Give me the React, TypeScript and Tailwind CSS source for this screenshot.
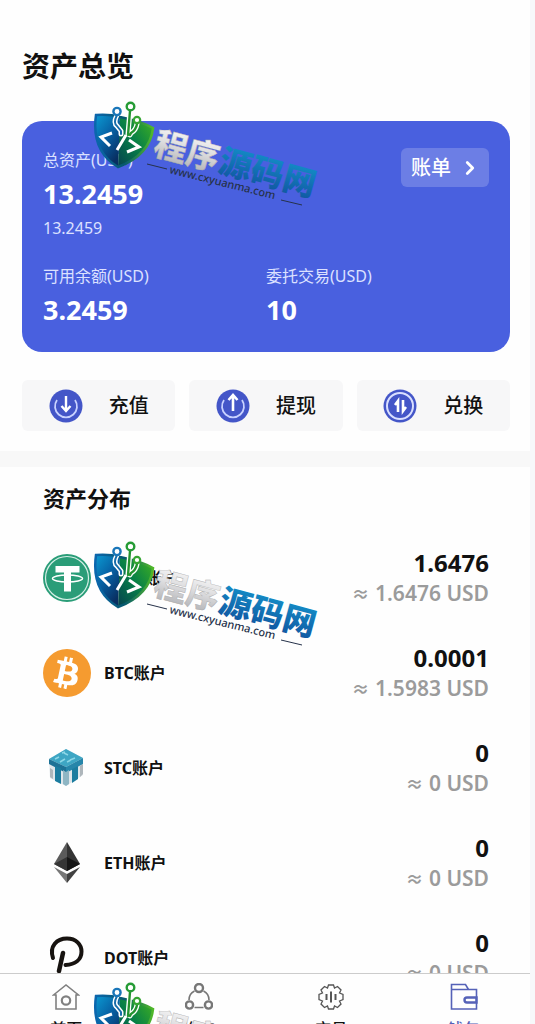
import type { ReactNode } from 'react';
import { ChevronRight } from 'lucide-react';
import { FaBtc } from 'react-icons/fa';

function TetherIcon() {
  return (
    <svg viewBox="0 0 48 48" className="size-12">
      <circle cx="24" cy="24" r="24" fill="#2a9d78" />
      <circle cx="24" cy="24" r="21.500" fill="none" stroke="#d5efe6" strokeWidth="1.200" />
      <path d="M12.500 12h24v6.500h-8.500v19h-7v-19h-8.500z" fill="#fff" />
      <ellipse cx="24.500" cy="24.500" rx="15" ry="3.500" fill="none" stroke="#fff" strokeWidth="1.500" />
    </svg>
  );
}

function BtcIcon() {
  return (
    <span className="flex size-12 items-center justify-center rounded-full bg-[#f59b30] text-white">
      <FaBtc className="size-8 rotate-12" />
    </span>
  );
}

function StcIcon() {
  return (
    <svg viewBox="0 0 48 48" className="size-12">
      <path d="M6 15 23 5l17 9v17L23 42 7 34z" fill="#dfe6ea" />
      <path d="M6 15 23 5l17 9-17 9z" fill="#3ea6c4" />
      <path d="M6 15l17 8v6L6 20z" fill="#1d7296" />
      <path d="M40 14l-17 9v6l17-9z" fill="#2786aa" />
      <path d="M12 22l6 2v16l-6-3zM29 25l6-3v13l-6 4z" fill="#1b7c9f" />
      <path d="M20 26l3 2 3-2v14l-3 2-3-2z" fill="#8fb6c4" />
      <path d="M7 24l3 2v9l-3-2zM37 22l3-2v10l-3 3z" fill="#aeb6bb" />
      <path d="M12 15l4-2m1 5 5-3m-1-6 4 2m2 5 5-2m-8 4 4-2m-9-7 3-1" stroke="#8bd6e6" strokeWidth="1.500" />
    </svg>
  );
}

function EthIcon() {
  return (
    <svg viewBox="0 0 48 48" className="size-12">
      <path d="M24 3 11 25l13 7z" fill="#5b5b5b" />
      <path d="M24 3l13 22-13 7z" fill="#343434" />
      <path d="M24 18 11 25l13 7z" fill="#353535" />
      <path d="M24 18l13 7-13 7z" fill="#161616" />
      <path d="M11 28l13 7v9z" fill="#777" />
      <path d="M37 28l-13 7v9z" fill="#414141" />
    </svg>
  );
}

function DotIcon() {
  return (
    <svg viewBox="0 0 48 48" className="size-12" fill="none" stroke="#171310" strokeWidth="4" strokeLinecap="round">
      <path d="M10 24C6 12 14 4.500 24 4.500c9 0 14.500 6 14.500 13 0 8-6 13-16 13.500" />
      <path d="M20 19l-4 18" strokeWidth="4.500" />
    </svg>
  );
}

const actions = [
  {
    name: '充值',
    icon: (
      <>
        <path d="M8 11a11 11 0 1 0 18 0" stroke="#c9d2ff" strokeWidth="1.800" />
        <path d="M17 7v14M12.500 17l4.500 5 4.500-5" stroke="#fff" strokeWidth="2.400" />
      </>
    ),
  },
  {
    name: '提现',
    icon: (
      <>
        <path d="M8 11a11 11 0 1 0 18 0" stroke="#c9d2ff" strokeWidth="1.800" />
        <path d="M17 22V6M12.500 11 17 6l4.500 5" stroke="#fff" strokeWidth="2.600" />
      </>
    ),
  },
  {
    name: '兑换',
    icon: (
      <>
        <circle cx="17" cy="17" r="13" stroke="#d9dfff" strokeWidth="2" />
        <path d="M15 23V12l-3 4M20 11v11l3-4" stroke="#fff" strokeWidth="2.600" />
      </>
    ),
  },
];

const accounts: { symbol: string; amount: string; usd: string; icon: ReactNode }[] = [
  { symbol: 'USDT', amount: '1.6476', usd: '1.6476', icon: <TetherIcon /> },
  { symbol: 'BTC', amount: '0.0001', usd: '1.5983', icon: <BtcIcon /> },
  { symbol: 'STC', amount: '0', usd: '0', icon: <StcIcon /> },
  { symbol: 'ETH', amount: '0', usd: '0', icon: <EthIcon /> },
  { symbol: 'DOT', amount: '0', usd: '0', icon: <DotIcon /> },
];

const tabs = [
  {
    name: '首页',
    color: 'text-[#808080]',
    icon: (
      <>
        <path d="M1.500 12 14 2l12.500 10H24v14H4V12z" />
        <circle cx="14" cy="17.500" r="4.200" strokeWidth="2.200" />
      </>
    ),
  },
  {
    name: '推广',
    color: 'text-[#777]',
    icon: (
      <>
        <circle cx="14" cy="5" r="4" strokeWidth="2.400" />
        <circle cx="4.500" cy="22" r="3.600" strokeWidth="2.400" />
        <circle cx="23.500" cy="22" r="3.600" strokeWidth="2.400" />
        <path d="M9.500 8C5.500 10 4 14 4 17M18.500 8c4 2 5.500 6 5.500 9M9.500 24.500h9" />
      </>
    ),
  },
  {
    name: '交易',
    color: 'text-[#555]',
    icon: (
      <>
        <path
          d="M11.500 2h5l1 3 3-1.500 3.500 3.500-1.500 3 3.500 1.500v5L22.500 18l1.500 3-3.500 3.500-3-1.500-1 3h-5l-1-3-3 1.500L4 21l1.500-3L2 16.500v-5L5.500 10 4 7l3.500-3.500 3 1.500z"
          strokeWidth="1.300"
        />
        <path d="M9.500 11v6M14 8.500v11M18.500 11v6" strokeWidth="2" />
      </>
    ),
  },
  {
    name: '钱包',
    color: 'text-[#5562b8]',
    icon: (
      <>
        <path d="M1.500 6.500h25V26h-25zM1.500 6.500V1.500h14l3 5" />
        <path d="M26.500 14.500H17a2.500 2.500 0 0 0 0 5h9.500z" strokeWidth="2.400" />
      </>
    ),
  },
];

function Watermark({ id, className }: { id: string; className: string }) {
  return (
    <svg viewBox="0 0 240 115" className={`pointer-events-none absolute left-[90px] h-[115px] w-[240px] ${className}`}>
      <defs>
        <linearGradient id={`${id}-left`} x1="0" y1="0" x2="0.6" y2="1">
          <stop offset="0" stopColor="#0b9ad2" />
          <stop offset="0.5" stopColor="#0762a5" />
          <stop offset="1" stopColor="#082f62" />
        </linearGradient>
        <linearGradient id={`${id}-right`} x1="1" y1="0" x2="0" y2="1">
          <stop offset="0" stopColor="#43b31f" />
          <stop offset="0.5" stopColor="#078047" />
          <stop offset="1" stopColor="#054050" />
        </linearGradient>
        <linearGradient id={`${id}-edge`}>
          <stop offset="0" stopColor="#0b66ae" />
          <stop offset="0.5" stopColor="#06586d" />
          <stop offset="1" stopColor="#51b928" />
        </linearGradient>
        <linearGradient id={`${id}-silver`} x1="0" y1="0" x2="0" y2="1">
          <stop offset="0" stopColor="#fff" />
          <stop offset="0.45" stopColor="#e0e0e2" />
          <stop offset="1" stopColor="#a9aaae" />
        </linearGradient>
        <linearGradient id={`${id}-blue`} x1="0" y1="0" x2="0" y2="1">
          <stop offset="0" stopColor="#1499cf" />
          <stop offset="1" stopColor="#104f9c" />
        </linearGradient>
      </defs>
      <path d="M6 17q14-1 24 2l-2 50Q1 53 6 17z" fill={`url(#${id}-left)`} />
      <path d="M30 19q20 4 33 11-3 27-35 39z" fill={`url(#${id}-right)`} />
      <path d="M6 17q14-1 24 2 20 4 33 11-3 27-35 39Q1 53 6 17z" fill="none" stroke={`url(#${id}-edge)`} strokeWidth="2.500" />
      <g fill="none" strokeLinecap="round" strokeLinejoin="round">
        <path d="M27 17q-4 8 0 11l4 5v3M40 13l-2 23M47 26q-1 6-6 9l-1 2" stroke="#fff" strokeWidth="5" />
        <path d="M27 17q-4 8 0 11l4 5v3" stroke="#176dab" strokeWidth="2" />
        <path d="M40 13l-2 24M47 26q-1 6-6 9l-1 2" stroke="#23932f" strokeWidth="2.400" />
        <circle cx="27" cy="13.500" r="3.600" fill="#fff" stroke="#1976b9" strokeWidth="2.400" />
        <circle cx="40.500" cy="8.500" r="3.800" fill="#fff" stroke="#259b35" strokeWidth="2.400" />
        <circle cx="47" cy="22" r="3.200" fill="#fff" stroke="#35a532" strokeWidth="2.200" />
      </g>
      <path d="M22 35 11 39l9 9M36 37l-9 15M39 42l10 7-12 5" fill="none" stroke="#fff" strokeWidth="3" />
      <g transform="translate(62 56) rotate(15)" fontFamily="'Noto Sans CJK SC', sans-serif" fontSize="33" fontWeight="900">
        <text fill={`url(#${id}-silver)`} stroke="#aaa" strokeWidth="0.400">
          程序
        </text>
        <text x="67" fill={`url(#${id}-blue)`}>
          源码网
        </text>
      </g>
      <text
        transform="translate(79 75) rotate(14)"
        fill="#26324a"
        fontFamily="'Noto Sans', sans-serif"
        fontSize="11"
        fontWeight="500"
      >
        www.cxyuanma.com
      </text>
      <path d="M57 66l20 5M191 102l21 5" stroke="#26324a" />
    </svg>
  );
}

export default function App() {
  return (
    <div className="relative h-screen overflow-hidden bg-[#f7f8fa] pr-[5px] font-['Noto_Sans','Noto_Sans_CJK_SC',sans-serif] text-[#111]">
      <div className="flex h-full flex-col bg-[#fefefe]">
        <main className="min-h-0 flex-1 overflow-y-auto [scrollbar-width:none]">
          <div className="pt-12 pr-5 pb-5 pl-[22px]">
            <h1 className="text-[28px] leading-9 font-bold">资产总览</h1>

            <section className="mt-[37px] rounded-[20px] bg-[#4960df] px-[21px] pt-[27px] pb-6 text-white">
              <div className="flex items-start justify-between">
                <div>
                  <p className="text-base leading-6 text-[#dce1ff]">总资产(USD)</p>
                  <p className="mt-1 text-[27px] leading-9 font-bold">13.2459</p>
                  <p className="mt-1 text-base leading-6 text-[#dce1ff]">13.2459</p>
                </div>
                <button className="flex h-[39px] items-center gap-2 rounded-md bg-[#6c7ee5] pr-2 pl-2.5 text-xl font-medium">
                  账单
                  <ChevronRight className="size-[22px]" strokeWidth={3} />
                </button>
              </div>
              <div className="mt-6 grid grid-cols-2">
                <div>
                  <p className="text-base leading-6 text-[#dce1ff]">可用余额(USD)</p>
                  <p className="mt-1 text-[27px] leading-9 font-bold">3.2459</p>
                </div>
                <div>
                  <p className="text-base leading-6 text-[#dce1ff]">委托交易(USD)</p>
                  <p className="mt-1 text-[27px] leading-9 font-bold">10</p>
                </div>
              </div>
            </section>

            <div className="mt-7 grid grid-cols-3 gap-[14px]">
              {actions.map((action) => (
                <button
                  key={action.name}
                  className="flex h-[51px] items-center justify-center gap-[26px] rounded-md bg-[#f7f7f8] text-xl font-medium"
                >
                  <svg viewBox="0 0 34 34" className="size-[34px]" fill="none">
                    <circle cx="17" cy="17" r="16.500" fill="#4456c8" />
                    {action.icon}
                  </svg>
                  {action.name}
                </button>
              ))}
            </div>
          </div>

          <section className="border-t-[16px] border-[#f8f8f8] pr-[41px] pl-[43px]">
            <h2 className="pt-[15px] pb-4 text-[22px] leading-8 font-bold">资产分布</h2>
            <ul>
              {accounts.map((account) => (
                <li key={account.symbol} className="flex h-[95px] items-center">
                  {account.icon}
                  <span className="ml-[13px] text-base font-bold">{account.symbol}账户</span>
                  <div className="ml-auto text-right">
                    <p className="text-2xl leading-[30px] font-bold">{account.amount}</p>
                    <p className="text-[21px] leading-[30px] font-semibold text-[#9b9b9b]">
                      <span className="text-lg">≈</span> {account.usd} USD
                    </p>
                  </div>
                </li>
              ))}
            </ul>
          </section>
        </main>

        <nav className="grid h-[51px] shrink-0 grid-cols-4 overflow-hidden border-t border-[#ccc] bg-[#fefefe]">
          {tabs.map((tab) => (
            <a key={tab.name} href="#" className="flex flex-col items-center pt-[9px]">
              <svg
                viewBox="0 0 28 28"
                className={`size-7 shrink-0 ${tab.color}`}
                fill="none"
                stroke="currentColor"
                strokeWidth="1.600"
              >
                {tab.icon}
              </svg>
              <span className={`mt-1.5 text-base leading-6 font-medium ${tab.name === '钱包' ? tab.color : ''}`}>
                {tab.name}
              </span>
            </a>
          ))}
        </nav>
      </div>

      <Watermark id="wm-top" className="top-[98px]" />
      <Watermark id="wm-middle" className="top-[538px]" />
      <Watermark id="wm-bottom" className="top-[979px]" />
    </div>
  );
}
